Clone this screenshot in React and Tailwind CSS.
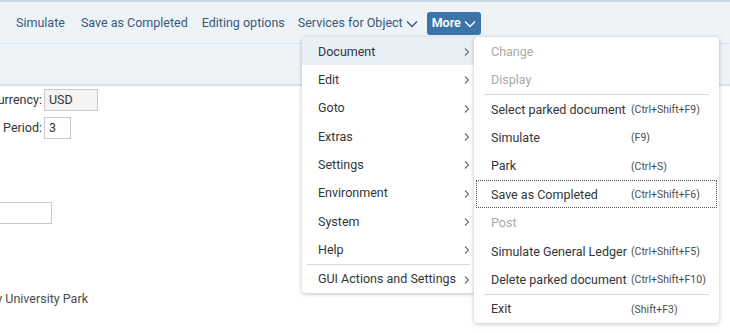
import React from 'react';

const mainItems = [
  { label: 'Document', active: true },
  { label: 'Edit' },
  { label: 'Goto' },
  { label: 'Extras' },
  { label: 'Settings' },
  { label: 'Environment' },
  { label: 'System' },
  { label: 'Help', sepAfter: true },
  { label: 'GUI Actions and Settings' },
];

const subItems = [
  { label: 'Change', disabled: true },
  { label: 'Display', disabled: true, sepAfter: true },
  { label: 'Select parked document', key: '(Ctrl+Shift+F9)' },
  { label: 'Simulate', key: '(F9)' },
  { label: 'Park', key: '(Ctrl+S)' },
  { label: 'Save as Completed', key: '(Ctrl+Shift+F6)', focus: true },
  { label: 'Post', disabled: true },
  { label: 'Simulate General Ledger', key: '(Ctrl+Shift+F5)' },
  { label: 'Delete parked document', key: '(Ctrl+Shift+F10)', sepAfter: true },
  { label: 'Exit', key: '(Shift+F3)' },
];

function Chevron({ className }) {
  return (
    <svg width="10" height="10" viewBox="0 0 10 10" className={className}>
      <path d="M3 1.5 L6.5 5 L3 8.5" fill="none" stroke="currentColor" strokeWidth="1.1" />
    </svg>
  );
}

function Down({ className }) {
  return (
    <svg width="12" height="8" viewBox="0 0 12 8" className={className}>
      <path d="M1 1.5 L6 6.5 L11 1.5" fill="none" stroke="currentColor" strokeWidth="1.4" />
    </svg>
  );
}

export default function App() {
  return (
    <div className="relative w-[730px] h-[333px] overflow-hidden bg-white text-[#32363a]" style={{ fontFamily: 'Roboto, "Liberation Sans", sans-serif' }}>
      {/* toolbar */}
      <div className="h-[44px] bg-[#eef3f8] border-t-2 border-[#c6d8ea] border-b border-b-[#dbe4ee] flex items-center pl-4 pt-[2px] text-[12.5px] text-[#36597c]">
        <span>Simulate</span>
        <span className="ml-[16px]">Save as Completed</span>
        <span className="ml-[14px]">Editing options</span>
        <span className="ml-[13px] flex items-center gap-[3px]">Services for Object <Down className="text-[#36597c]" /></span>
        <span className="ml-[9px] h-[23px] px-[5px] rounded-[3px] bg-[#3b74a9] text-white font-semibold flex items-center gap-[3px]">
          More <Down />
        </span>
      </div>

      {/* header strip */}
      <div className="h-[42px] bg-[#eef3f8] border-b-2 border-[#d6e1ec]" />

      {/* form content */}
      <div className="text-[12.5px] text-[#32363a]">
        <div className="flex items-center h-[22px] mt-[3px]">
          <div className="w-[42px] flex justify-end whitespace-nowrap">Currency:</div>
          <div className="ml-[2px] w-[54px] h-[22px] bg-[#f3f3f3] border border-[#c9c9c9] pl-[4px] leading-[20px]">USD</div>
        </div>
        <div className="flex items-center h-[22px] mt-[6px]">
          <div className="w-[42px] flex justify-end whitespace-nowrap">Posting Period:</div>
          <div className="ml-[2px] w-[27px] h-[22px] bg-white border border-[#c9c9c9] pl-[4px] leading-[20px]">3</div>
        </div>
        <div className="flex h-[22px] mt-[63px]">
          <div className="w-[53px] h-[22px] bg-white border border-[#c9c9c9] -ml-[1px]" />
        </div>
        <div className="flex mt-[66px]">
          <div className="w-[88px] flex justify-end whitespace-nowrap text-[#4a4d50]">State University University Park</div>
        </div>
      </div>

      {/* main menu */}
      <div className="absolute left-[302px] top-[37px] w-[173px] bg-white rounded-[4px] shadow-[0_1px_4px_rgba(0,0,0,0.25)] text-[12.5px]">
        {mainItems.map((it) => (
          <div key={it.label}>
            <div className={`h-[28.33px] flex items-center pl-4 pr-[3px] pt-[2px] ${it.active ? 'bg-[#e8eff6] rounded-t-[4px]' : ''}`}>
              <span className="flex-1 whitespace-nowrap">{it.label}</span>
              <Chevron className="text-[#6a6d70]" />
            </div>
            {it.sepAfter && <div className="mx-[5px] h-px bg-[#d9d9d9]" />}
          </div>
        ))}
      </div>

      {/* sub menu */}
      <div className="absolute left-[474px] top-[37px] w-[245px] bg-white rounded-[4px] shadow-[0_1px_4px_rgba(0,0,0,0.25)] text-[12.5px]">
        {subItems.map((it) => (
          <div key={it.label}>
            <div className={`h-[28.4px] flex items-center pt-[2px] ${it.focus ? 'mx-[2px] pl-[14px] border border-dotted border-[#555]' : 'pl-[17px]'}`}>
              <span className={`w-[140px] whitespace-nowrap ${it.disabled ? 'text-[#a6a9ac]' : ''}`}>{it.label}</span>
              {it.key && <span className="text-[10.5px] text-[#4a4d50] whitespace-nowrap">{it.key}</span>}
            </div>
            {it.sepAfter && <div className="mx-[10px] h-px bg-[#d9d9d9]" />}
          </div>
        ))}
      </div>
    </div>
  );
}
